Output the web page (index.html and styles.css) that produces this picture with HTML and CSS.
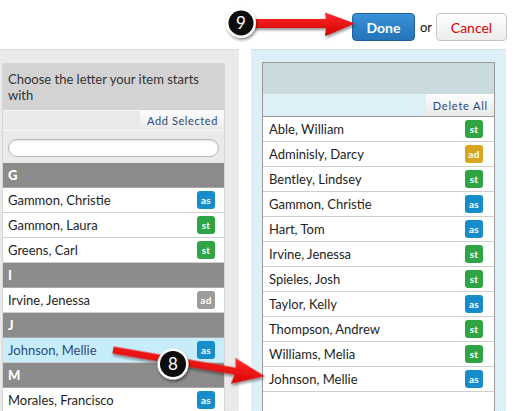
FILE: index.html
```html
<!DOCTYPE html>
<html>
<head>
<meta charset="utf-8">
<link rel="stylesheet" href="styles.css">
</head>
<body>
<div class="page">
  <div class="topbar">
    <button class="btn btn-done">Done</button>
    <span class="or">or</span>
    <button class="btn btn-cancel">Cancel</button>
  </div>
  <div class="main">
    <div class="col col-left">
      <div class="panel panel-left">
        <div class="panel-head">Choose the letter your item starts with</div>
        <div class="panel-actions"><button class="act">Add Selected</button></div>
        <div class="search"><input class="search-input" type="text"></div>
        <div class="letter">G</div>
        <div class="row"><span>Gammon, Christie</span><span class="badge as">as</span></div>
        <div class="row"><span>Gammon, Laura</span><span class="badge st">st</span></div>
        <div class="row"><span>Greens, Carl</span><span class="badge st">st</span></div>
        <div class="letter">I</div>
        <div class="row"><span>Irvine, Jenessa</span><span class="badge off">ad</span></div>
        <div class="letter">J</div>
        <div class="row selected"><span>Johnson, Mellie</span><span class="badge as">as</span></div>
        <div class="letter">M</div>
        <div class="row"><span>Morales, Francisco</span><span class="badge as">as</span></div>
      </div>
    </div>
    <div class="col col-right">
      <div class="panel panel-right">
        <div class="panel-head blank"></div>
        <div class="panel-actions"><button class="act">Delete All</button></div>
        <div class="row"><span>Able, William</span><span class="badge st">st</span></div>
        <div class="row"><span>Adminisly, Darcy</span><span class="badge ad">ad</span></div>
        <div class="row"><span>Bentley, Lindsey</span><span class="badge st">st</span></div>
        <div class="row"><span>Gammon, Christie</span><span class="badge as">as</span></div>
        <div class="row"><span>Hart, Tom</span><span class="badge as">as</span></div>
        <div class="row"><span>Irvine, Jenessa</span><span class="badge st">st</span></div>
        <div class="row"><span>Spieles, Josh</span><span class="badge st">st</span></div>
        <div class="row"><span>Taylor, Kelly</span><span class="badge as">as</span></div>
        <div class="row"><span>Thompson, Andrew</span><span class="badge st">st</span></div>
        <div class="row"><span>Williams, Melia</span><span class="badge st">st</span></div>
        <div class="row"><span>Johnson, Mellie</span><span class="badge as">as</span></div>
      </div>
    </div>
  </div>
  <svg class="annot" width="516" height="411" viewBox="0 0 516 411">
    <defs>
      <filter id="sh" x="-30%" y="-30%" width="160%" height="160%">
        <feDropShadow dx="1" dy="2" stdDeviation="1.5" flood-color="#000" flood-opacity="0.45"/>
      </filter>
      <linearGradient id="red" x1="0" y1="0" x2="0" y2="1">
        <stop offset="0" stop-color="#ff2a2a"/>
        <stop offset="1" stop-color="#d40000"/>
      </linearGradient>
    </defs>
    <g filter="url(#sh)">
      <path d="M252 19 L326 19 L325 12.5 L355 23.5 L325 36 L326 28 L252 28 Z" fill="url(#red)"/>
    </g>
    <g filter="url(#sh)">
      <circle cx="241" cy="23" r="15" fill="#fff"/>
      <circle cx="241" cy="23" r="12.5" fill="#0a0a0a"/>
    </g>
    <text x="241" y="29" class="num">9</text>
    <g filter="url(#sh)" transform="translate(113 350) rotate(9.8)">
      <path d="M0 -3.5 L124 -3.5 L122 -13 L154 0 L122 13 L124 3.5 L0 3.5 Z" fill="url(#red)"/>
    </g>
    <g filter="url(#sh)">
      <circle cx="173" cy="364" r="15.5" fill="#fff"/>
      <circle cx="173" cy="364" r="13" fill="#0a0a0a"/>
    </g>
    <text x="173" y="370" class="num">8</text>
  </svg>
</div>
</body>
</html>
```
FILE: styles.css
```css
* { box-sizing: border-box; }
html, body { margin: 0; padding: 0; background: #fff; }
body { font-family: Lato, "Open Sans", sans-serif; color: #222; }
.page { position: relative; width: 516px; height: 411px; overflow: hidden; }

.topbar {
  height: 49px;
  display: flex;
  align-items: flex-start;
  justify-content: flex-end;
  padding: 13px 9px 0 0;
}
.btn {
  height: 28px;
  border-radius: 4px;
  font-family: Lato, sans-serif;
  font-size: 14px;
  padding: 0;
  cursor: pointer;
}
.btn-done {
  width: 63px;
  background: linear-gradient(#3a91d6, #2474b9);
  border: 1px solid #1d619f;
  color: #fff;
  font-weight: 700;
}
.or { font-size: 13px; color: #111; margin: 6px 4px 0 5px; }
.btn-cancel {
  width: 71px;
  background: linear-gradient(#fff, #ececec);
  border: 1px solid #c4c4c4;
  color: #d80000;
}

.main { display: flex; gap: 12px; height: 362px; }
.col {
  border-top: 1px dotted #c9c9c9;
  height: 100%;
}
.col-left {
  width: 239px;
  padding: 13px 14px 0 2px;
  background: repeating-conic-gradient(#e4e4e4 0 25%, #f0f0f0 0 50%) 0 0 / 2px 2px;
}
.col-right {
  width: 255px;
  padding: 12px 11px 0 11px;
  background: repeating-conic-gradient(#d2ebf4 0 25%, #e7f5fa 0 50%) 0 0 / 2px 2px;
}
.panel { height: 100%; overflow: hidden; }
.panel-left { border: 1px solid #d6d6d6; border-bottom: 0; }
.panel-right { border: 1px solid #999; border-bottom: 0; background: #fff; }

.panel-head {
  font-size: 13px;
  line-height: 16px;
  padding: 7px 5px 7px 5px;
  color: #333;
  height: 46px;
  background: repeating-conic-gradient(#cdcdcd 0 25%, #d9d9d9 0 50%) 0 0 / 2px 2px;
}
.panel-head.blank {
  height: 31px;
  background: repeating-conic-gradient(#c3d6d9 0 25%, #d0e0e3 0 50%) 0 0 / 2px 2px;
}
.panel-actions {
  height: 21px;
  display: flex;
  justify-content: flex-end;
  border-top: 1px solid #f8f8f8;
  border-bottom: 1px solid #f8f8f8;
}
.panel-right .panel-actions {
  height: 23px;
  border-top: 0;
  border-bottom: 1px solid #999;
  background: repeating-conic-gradient(#d2ebf4 0 25%, #e7f5fa 0 50%) 0 0 / 2px 2px;
}
.act {
  border: 0;
  margin: 0;
  padding: 0 6px 0 7px;
  height: 100%;
  background: linear-gradient(#fdfdfd, #e9e9e9);
  font-family: Lato, sans-serif;
  font-size: 11px;
  letter-spacing: 0.6px;
  color: #2b4a78;
}
.panel-right .act { padding: 0 6px 0 7px; letter-spacing: 0.8px; }

.search { height: 32px; padding: 8px 5px 0 5px; }
.search-input {
  display: block;
  width: 211px;
  height: 18px;
  border: 1px solid #b9b9b9;
  border-radius: 9px;
  background: #fff;
  box-shadow: inset 0 1px 2px rgba(0,0,0,0.12);
  outline: none;
}

.letter {
  height: 25px;
  padding: 0 5px;
  line-height: 25px;
  font-size: 13px;
  font-weight: 900;
  color: #fff;
  background: repeating-conic-gradient(#868686 0 25%, #919191 0 50%) 0 0 / 2px 2px;
  border-bottom: 1px solid #a8a8a8;
}
.row {
  height: 25px;
  display: flex;
  align-items: center;
  justify-content: space-between;
  padding: 0 9px 0 5px;
  font-size: 13px;
  color: #1e1e1e;
  background: #fff;
  border-bottom: 1px solid #cfcfcf;
}
.panel-right .row { padding: 0 11px 0 6px; }
.row.selected { background: #c8edfa; color: #2a4a7a; }

.badge {
  width: 18px;
  height: 18px;
  border-radius: 3px;
  font-size: 10px;
  font-weight: 700;
  color: #fff;
  display: flex;
  align-items: center;
  justify-content: center;
  letter-spacing: 0.3px;
}
.badge.as { background: #168dcb; }
.badge.st { background: #2ea444; }
.badge.ad { background: #d8a61e; }
.badge.off { background: #9c9c9c; }

.annot { position: absolute; left: 0; top: 0; pointer-events: none; }
.num { font-family: Lato, sans-serif; font-size: 17px; fill: #fff; text-anchor: middle; }
```
